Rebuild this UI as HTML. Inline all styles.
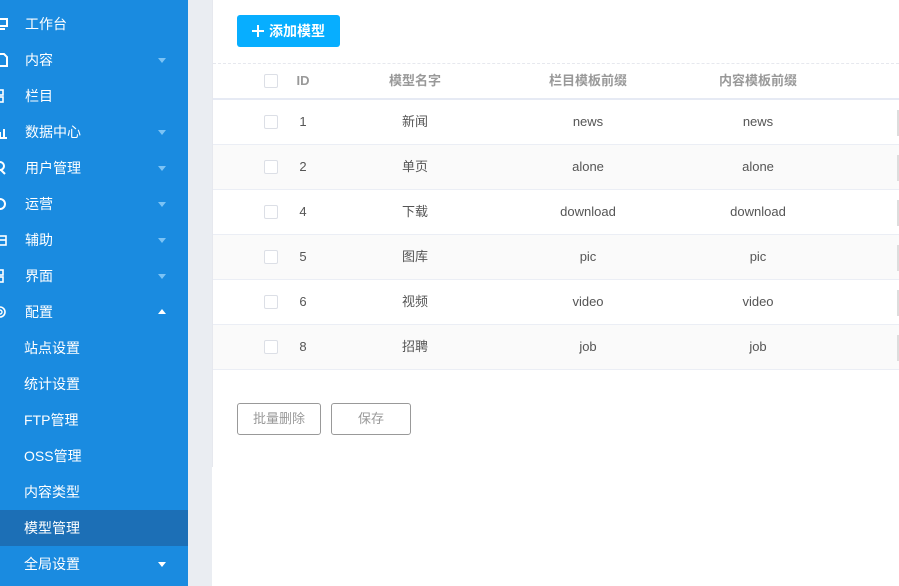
<!DOCTYPE html>
<html><head><meta charset="utf-8"><style>
*{margin:0;padding:0;box-sizing:border-box}
body{width:899px;height:586px;overflow:hidden;background:#fff;font-family:"Liberation Sans","Noto Sans CJK SC",sans-serif;position:relative}
.side{position:absolute;left:0;top:0;width:188px;height:586px;background:#1a8be0;color:#fff;font-size:14px}
.mi{position:absolute;left:0;width:188px;height:36px;line-height:36px}
.mi .t{position:absolute;left:25px}
.mi.sub .t{left:24px}
.mi.act{background:#1c6fb6}
.arr{position:absolute;left:158px;top:16px;width:0;height:0;border-left:4px solid transparent;border-right:4px solid transparent;border-top:5px solid #7cc3f5}
.arr.up{border-top:none;border-bottom:5px solid #fff;top:15px}
.arr.w{border-top-color:#fff}
.gap{position:absolute;left:188px;top:0;width:24px;height:586px;background:#eaedf2}
.card{position:absolute;left:212px;top:0;width:687px;height:467px;border-left:1px solid #e6e8ee;background:#fff}
.btn{position:absolute;left:237px;top:15px;width:103px;height:32px;background:#07aeff;border-radius:3px;color:#fff;font-size:14px;line-height:32px;padding-left:32px;font-weight:bold}
.btn:before{content:"";position:absolute;left:15px;top:15px;width:12px;height:2px;background:#fff}
.btn:after{content:"";position:absolute;left:20px;top:10px;width:2px;height:12px;background:#fff}
.dash{position:absolute;left:213px;top:63px;width:686px;border-top:1px dashed #e6e8ee}
.hd{position:absolute;left:213px;top:64px;width:686px;height:36px;border-bottom:2px solid #e6eaf4;color:#999;font-size:13px;font-weight:bold;line-height:34px}
.row{position:absolute;left:213px;width:686px;height:45px;border-bottom:1px solid #ebeef5;color:#555;font-size:13px;line-height:44px}
.row.s{background:#fafafa}
.c{position:absolute;top:0;height:100%;text-align:center}
.cb{position:absolute;left:51px;width:14px;height:14px;border:1px solid #dcdfe6;border-radius:2px;background:#fff}
.rb{position:absolute;left:684px;top:10px;width:2px;height:26px;background:#ddd}
.ob{position:absolute;top:403px;height:32px;border:1px solid #999;border-radius:3px;color:#999;font-size:13px;line-height:30px;text-align:center}
</style></head><body>
<div class="side">
<div class="mi" style="top:6px"><svg style="position:absolute;left:-3px;top:12px" width="12" height="12"><rect x="1" y="1" width="9" height="7" fill="none" stroke="#fff" stroke-width="2"/><line x1="2" y1="11" x2="8" y2="11" stroke="#fff" stroke-width="2"/></svg><span class="t">工作台</span></div>
<div class="mi" style="top:42px"><svg style="position:absolute;left:-3px;top:11px" width="12" height="14"><path d="M1 1H7L10 4V13H1Z" fill="none" stroke="#fff" stroke-width="2"/></svg><span class="t">内容</span><span class="arr"></span></div>
<div class="mi" style="top:78px"><svg style="position:absolute;left:-3px;top:11px" width="12" height="14"><rect x="1" y="1" width="5" height="5" fill="none" stroke="#fff" stroke-width="1.6"/><rect x="1" y="8" width="5" height="5" fill="none" stroke="#fff" stroke-width="1.6"/></svg><span class="t">栏目</span></div>
<div class="mi" style="top:114px"><svg style="position:absolute;left:-3px;top:11px" width="12" height="14"><path d="M1 13H10M3 12V7M7 12V4" stroke="#fff" stroke-width="2"/></svg><span class="t">数据中心</span><span class="arr"></span></div>
<div class="mi" style="top:150px"><svg style="position:absolute;left:-4px;top:11px" width="12" height="14"><circle cx="4" cy="5" r="4" fill="none" stroke="#fff" stroke-width="2"/><path d="M5 9L9 13" stroke="#fff" stroke-width="2"/></svg><span class="t">用户管理</span><span class="arr"></span></div>
<div class="mi" style="top:186px"><svg style="position:absolute;left:-4px;top:11px" width="12" height="14"><circle cx="4" cy="7" r="5" fill="none" stroke="#fff" stroke-width="2"/></svg><span class="t">运营</span><span class="arr"></span></div>
<div class="mi" style="top:222px"><svg style="position:absolute;left:-3px;top:11px" width="12" height="14"><rect x="1" y="3" width="8" height="9" fill="none" stroke="#fff" stroke-width="1.6"/><path d="M1 7H9" stroke="#fff" stroke-width="1.6"/></svg><span class="t">辅助</span><span class="arr"></span></div>
<div class="mi" style="top:258px"><svg style="position:absolute;left:-3px;top:11px" width="12" height="14"><rect x="1" y="1" width="5" height="5" fill="none" stroke="#fff" stroke-width="1.6"/><rect x="1" y="8" width="5" height="5" fill="none" stroke="#fff" stroke-width="1.6"/></svg><span class="t">界面</span><span class="arr"></span></div>
<div class="mi" style="top:294px"><svg style="position:absolute;left:-4px;top:11px" width="12" height="14"><circle cx="4" cy="7" r="5" fill="none" stroke="#fff" stroke-width="1.6"/><circle cx="4" cy="7" r="2" fill="none" stroke="#fff" stroke-width="1.4"/></svg><span class="t">配置</span><span class="arr up"></span></div>
<div class="mi sub" style="top:330px"><span class="t">站点设置</span></div>
<div class="mi sub" style="top:366px"><span class="t">统计设置</span></div>
<div class="mi sub" style="top:402px"><span class="t">FTP管理</span></div>
<div class="mi sub" style="top:438px"><span class="t">OSS管理</span></div>
<div class="mi sub" style="top:474px"><span class="t">内容类型</span></div>
<div class="mi sub act" style="top:510px"><span class="t">模型管理</span></div>
<div class="mi sub" style="top:546px"><span class="t">全局设置</span><span class="arr w"></span></div>
</div>
<div class="gap"></div>
<div class="card"></div>
<div class="btn">添加模型</div>
<div class="dash"></div>
<div class="hd"><span class="cb" style="top:10px"></span><span class="c" style="left:70px;width:40px">ID</span><span class="c" style="left:142px;width:120px">模型名字</span><span class="c" style="left:315px;width:120px">栏目模板前缀</span><span class="c" style="left:485px;width:120px">内容模板前缀</span></div>
<div class="row" style="top:100px"><span class="cb" style="top:15px"></span><span class="c" style="left:70px;width:40px">1</span><span class="c" style="left:142px;width:120px">新闻</span><span class="c" style="left:315px;width:120px">news</span><span class="c" style="left:485px;width:120px">news</span><span class="rb"></span></div>
<div class="row s" style="top:145px"><span class="cb" style="top:15px"></span><span class="c" style="left:70px;width:40px">2</span><span class="c" style="left:142px;width:120px">单页</span><span class="c" style="left:315px;width:120px">alone</span><span class="c" style="left:485px;width:120px">alone</span><span class="rb"></span></div>
<div class="row" style="top:190px"><span class="cb" style="top:15px"></span><span class="c" style="left:70px;width:40px">4</span><span class="c" style="left:142px;width:120px">下载</span><span class="c" style="left:315px;width:120px">download</span><span class="c" style="left:485px;width:120px">download</span><span class="rb"></span></div>
<div class="row s" style="top:235px"><span class="cb" style="top:15px"></span><span class="c" style="left:70px;width:40px">5</span><span class="c" style="left:142px;width:120px">图库</span><span class="c" style="left:315px;width:120px">pic</span><span class="c" style="left:485px;width:120px">pic</span><span class="rb"></span></div>
<div class="row" style="top:280px"><span class="cb" style="top:15px"></span><span class="c" style="left:70px;width:40px">6</span><span class="c" style="left:142px;width:120px">视频</span><span class="c" style="left:315px;width:120px">video</span><span class="c" style="left:485px;width:120px">video</span><span class="rb"></span></div>
<div class="row s" style="top:325px"><span class="cb" style="top:15px"></span><span class="c" style="left:70px;width:40px">8</span><span class="c" style="left:142px;width:120px">招聘</span><span class="c" style="left:315px;width:120px">job</span><span class="c" style="left:485px;width:120px">job</span><span class="rb"></span></div>
<div class="ob" style="left:237px;width:84px">批量删除</div>
<div class="ob" style="left:331px;width:80px">保存</div>
</body></html>
